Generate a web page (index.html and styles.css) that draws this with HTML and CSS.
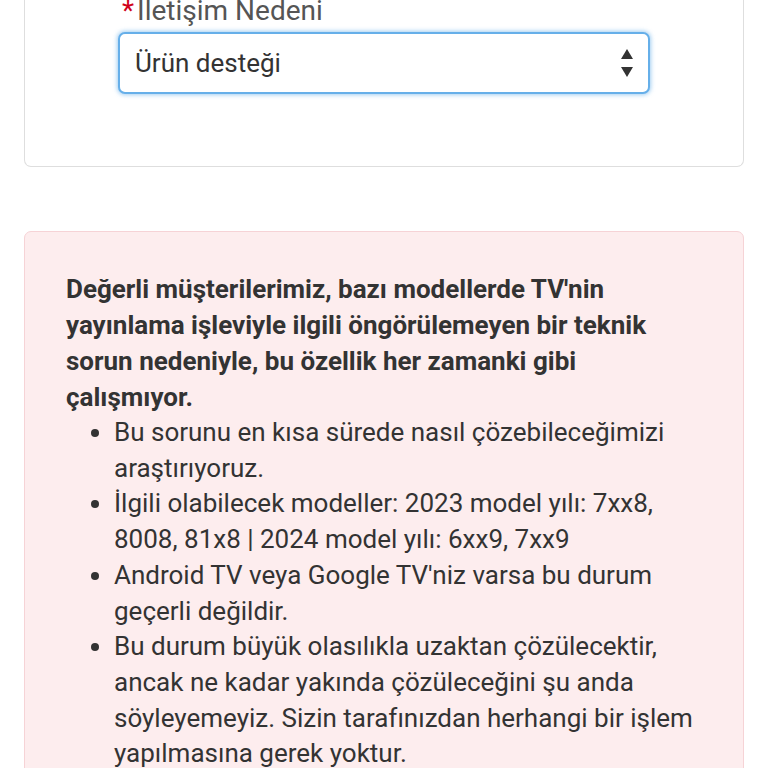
FILE: index.html
```html
<!DOCTYPE html>
<html lang="tr">
<head>
<meta charset="utf-8">
<link rel="stylesheet" href="styles.css">
</head>
<body>
<div class="page">
  <section class="card form-card">
    <label class="field-label"><span class="req">*</span>İletişim Nedeni</label>
    <div class="select">
      <span class="select-value">Ürün desteği</span>
      <svg class="select-arrows" width="14" height="30" viewBox="0 0 14 30">
        <path d="M7 1 L13 11 L1 11 Z" fill="#333"/>
        <path d="M1 19 L13 19 L7 29 Z" fill="#333"/>
      </svg>
    </div>
  </section>

  <section class="card alert-card">
    <p class="alert-lead">Değerli müşterilerimiz, bazı modellerde TV'nin yayınlama işleviyle ilgili öngörülemeyen bir teknik sorun nedeniyle, bu özellik her zamanki gibi çalışmıyor.</p>
    <ul class="alert-list">
      <li>Bu sorunu en kısa sürede nasıl çözebileceğimizi araştırıyoruz.</li>
      <li>İlgili olabilecek modeller: 2023 model yılı: 7xx8, 8008, 81x8 | 2024 model yılı: 6xx9, 7xx9</li>
      <li>Android TV veya Google TV'niz varsa bu durum geçerli değildir.</li>
      <li>Bu durum büyük olasılıkla uzaktan çözülecektir, ancak ne kadar yakında çözüleceğini şu anda söyleyemeyiz. Sizin tarafınızdan herhangi bir işlem yapılmasına gerek yoktur.</li>
    </ul>
  </section>
</div>
</body>
</html>
```

FILE: styles.css
```css
html, body {
  margin: 0;
  padding: 0;
  background: #ffffff;
}
body {
  font-family: Roboto, "Noto Sans", sans-serif;
  color: #333333;
  font-size: 26px;
  line-height: 36px;
  overflow: hidden;
}
.page {
  padding: 0 24px;
  margin-top: -40px;
  display: flex;
  flex-direction: column;
  gap: 64px;
}
.card {
  border-radius: 7px;
}
.form-card {
  border: 1px solid #dedede;
  border-top: none;
  padding: 33px 93px 72px 93px;
  display: flex;
  flex-direction: column;
}
.field-label {
  color: #555555;
  font-size: 28px;
  line-height: 36px;
  padding-left: 4px;
  margin-bottom: 3px;
}
.req {
  color: #d0021b;
  margin-right: 3px;
}
.select {
  height: 58px;
  border: 2px solid #66afe9;
  border-radius: 7px;
  box-shadow: 0 0 4px 1px rgba(102, 175, 233, 0.6);
  display: flex;
  align-items: center;
  justify-content: space-between;
  padding: 0 14px 0 15px;
  background: #fff;
}
.select-value {
  color: #333;
  font-size: 26px;
}
.select-arrows {
  display: block;
}
.alert-card {
  background: #fdedee;
  border: 1px solid #f6d3d6;
  padding: 39px 41px 40px 41px;
}
.alert-lead {
  margin: 0;
  font-weight: 700;
  font-size: 26px;
  color: #333;
}
.alert-list {
  margin: 0;
  padding-left: 48px;
  line-height: 35.7px;
}
```
